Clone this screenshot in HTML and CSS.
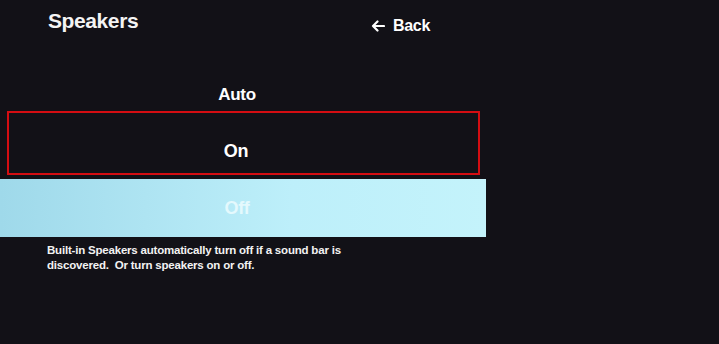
FILE: index.html
```html
<!DOCTYPE html>
<html lang="en">
<head>
<meta charset="UTF-8">
<meta name="viewport" content="width=device-width, initial-scale=1.0">
<title>Speakers</title>
<link rel="stylesheet" href="styles.css">
</head>
<body>
  <div class="screen">
    <div class="header">
      <h1 class="title">Speakers</h1>
      <span class="back">
        <svg class="back-icon" viewBox="0 0 14 12" width="14" height="12">
          <path d="M13 6H2M6.5 1.5L2 6l4.5 4.5" fill="none" stroke="#fff" stroke-width="2.2" stroke-linecap="round" stroke-linejoin="round"/>
        </svg>
        Back
      </span>
    </div>

    <div class="menu">
      <div class="option option-auto">Auto</div>
      <div class="option option-on">On</div>
      <div class="option option-off">Off</div>
    </div>

    <p class="hint">
      Built-in Speakers automatically turn off if a sound bar is<br>
      discovered.&nbsp; Or turn speakers on or off.
    </p>
  </div>
</body>
</html>
```

FILE: styles.css
```css
html, body {
  margin: 0;
  height: 100%;
}

body {
  font-family: "Liberation Sans", Arial, sans-serif;
  background-color: #121117;
  color: #fff;
}

.screen {
  display: flex;
  flex-direction: column;
}

.header {
  display: flex;
  justify-content: space-between;
  align-items: flex-start;
  width: 430px;
  padding: 9px 0 0 48px;
  box-sizing: border-box;
}

.title {
  margin: 0;
  font-size: 21px;
  font-weight: bold;
  letter-spacing: -0.4px;
  color: #f4f4f4;
}

.back {
  display: flex;
  align-items: center;
  gap: 8px;
  margin-top: 8px;
  font-size: 16px;
  font-weight: bold;
  letter-spacing: -0.3px;
}

.menu {
  display: flex;
  flex-direction: column;
  width: 486px;
  margin-top: 36px;
}

.option {
  display: flex;
  align-items: center;
  justify-content: center;
  box-sizing: border-box;
  padding-right: 12px;
  font-size: 18px;
  font-weight: bold;
  letter-spacing: -0.3px;
}

.option-auto {
  height: 40px;
  padding-top: 14px;
  align-items: flex-start;
  font-size: 17px;
}

.option-on {
  height: 64px;
  margin: 0 6px 4px 7px;
  padding: 16px 15px 0 0;
  border: 2px solid #d40d12;
}

.option-off {
  height: 58px;
  background: linear-gradient(90deg, #9fd9ea, #bdeffa 60%, #c4f3fb);
  color: #e4f9fd;
}

.hint {
  margin: 6px 0 0 47px;
  font-size: 11.5px;
  font-weight: bold;
  line-height: 15px;
  letter-spacing: -0.2px;
  color: #f2f2f2;
}
```
